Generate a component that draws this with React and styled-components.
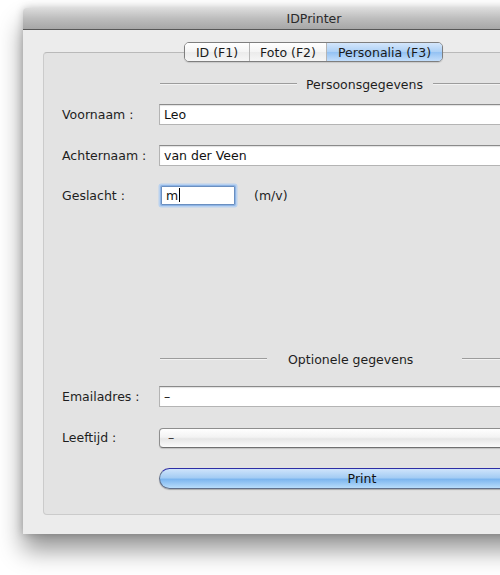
import React from "react";
import styled, { createGlobalStyle } from "styled-components";

const Global = createGlobalStyle`
  html, body { margin: 0; padding: 0; background: #ffffff; overflow: hidden; }
  body { width: 500px; height: 575px; font-family: "DejaVu Sans", "Liberation Sans", sans-serif; }
`;

const Desktop = styled.div`
  width: 500px;
  height: 575px;
  overflow: hidden;
  padding: 8px 0 0 23px;
  box-sizing: border-box;
`;

const Window = styled.div`
  width: 582px;
  height: 526px;
  background: #ececec;
  display: flex;
  flex-direction: column;
  box-shadow: 0 16px 24px rgba(0, 0, 0, 0.42), 0 0 8px rgba(0, 0, 0, 0.22);
  border-radius: 4px 4px 0 0;
`;

const TitleBar = styled.div`
  height: 21px;
  flex: none;
  display: flex;
  align-items: center;
  justify-content: center;
  background: linear-gradient(#dcdcdc, #bdbdbd 50%, #a7a7a7);
  border-bottom: 1px solid #575757;
  border-radius: 4px 4px 0 0;
  font-size: 12.5px;
  color: #2a2a2a;
`;

const Body = styled.div`
  flex: 1;
  display: flex;
  flex-direction: column;
  padding: 12px 21px 19px 20px;
`;

const TabsRow = styled.div`
  display: flex;
  justify-content: center;
  margin-bottom: -10px;
  position: relative;
  z-index: 1;
`;

const Segmented = styled.div`
  display: flex;
  height: 18px;
  border: 1px solid #7e7e7e;
  border-radius: 5px;
  overflow: hidden;
  box-shadow: 0 1px 1px rgba(0, 0, 0, 0.12);
`;

const Segment = styled.div`
  width: ${(p) => p.$w}px;
  display: flex;
  align-items: center;
  justify-content: center;
  font-size: 12.5px;
  color: #1a1a1a;
  background: ${(p) =>
    p.$active
      ? "linear-gradient(#d4e6fb, #acd0f6 50%, #93c1f3 51%, #c3defb)"
      : "linear-gradient(#ffffff, #f4f4f4 50%, #ebebeb 51%, #f6f6f6)"};
  border-left: ${(p) => (p.$first ? "none" : "1px solid #b5b5b5")};
`;

const Panel = styled.div`
  flex: 1;
  box-sizing: border-box;
  background: #e3e3e3;
  border: 1px solid #cbcbcb;
  border-top-color: #b9b9b9;
  border-radius: 4px;
  padding: 22px 18px 0 18px;
  display: flex;
  flex-direction: column;
`;

const SectionHeader = styled.div`
  display: flex;
  align-items: center;
  margin-left: ${(p) => p.$indent}px;
  height: 18px;
  margin-top: ${(p) => p.$top}px;
  font-size: 12.5px;
  color: #1e1e1e;
`;

const Line = styled.div`
  height: 1px;
  background: #9c9c9c;
  border-bottom: 1px solid #f2f2f2;
  ${(p) => (p.$w ? `width: ${p.$w}px; flex: none;` : "flex: 1;")}
`;

const HeaderText = styled.span`
  padding: 0 ${(p) => p.$r}px 0 ${(p) => p.$l}px;
  white-space: nowrap;
`;

const Row = styled.div`
  display: flex;
  align-items: center;
  margin-top: ${(p) => p.$top}px;
  height: ${(p) => p.$h || 22}px;
`;

const Label = styled.div`
  width: 97px;
  flex: none;
  font-size: 12.5px;
  color: #1e1e1e;
`;

const TextField = styled.div`
  flex: 1;
  height: 21px;
  box-sizing: border-box;
  background: #fff;
  border: 1px solid #b4b4b4;
  border-top-color: #8a8a8a;
  box-shadow: inset 0 1px 1px rgba(0, 0, 0, 0.12);
  display: flex;
  align-items: center;
  padding-left: 4px;
  font-size: 12.5px;
  color: #111;
`;

const FocusField = styled(TextField)`
  flex: none;
  width: 74px;
  height: 19px;
  margin-left: 2px;
  border-color: #6a8fc0;
  box-shadow: 0 0 0 1px #8fb4e4, 0 0 0 2.5px #b9d2f0;
  border-radius: 1px;
`;

const Caret = styled.span`
  display: inline-block;
  width: 1px;
  height: 14px;
  background: #000;
  margin-left: 1px;
`;

const Hint = styled.span`
  font-size: 12.5px;
  color: #1e1e1e;
  margin-left: 19px;
`;

const Popup = styled.div`
  flex: 1;
  height: 20px;
  box-sizing: border-box;
  border: 1px solid #8e8e8e;
  border-bottom-color: #6f6f6f;
  border-radius: 4px;
  background: linear-gradient(#ffffff, #f3f3f3 45%, #e6e6e6 55%, #fbfbfb);
  box-shadow: 0 1px 1px rgba(0, 0, 0, 0.15);
  display: flex;
  align-items: center;
  padding-left: 8px;
  font-size: 12.5px;
  color: #333;
`;

const PrintButton = styled.div`
  flex: 1;
  margin-left: 97px;
  height: 21px;
  box-sizing: border-box;
  border: 1px solid #5f6e8a;
  border-top-color: #2e2ea6;
  border-radius: 11px;
  background: linear-gradient(#cfe4fb, #a5cdf4 45%, #7db6ef 55%, #b8dcfb);
  box-shadow: 0 1px 1px rgba(0, 0, 0, 0.25);
  display: flex;
  align-items: center;
  justify-content: center;
  font-size: 12.5px;
  color: #111;
`;

export default function App() {
  return (
    <>
      <Global />
      <Desktop>
        <Window>
          <TitleBar>IDPrinter</TitleBar>
          <Body>
            <TabsRow>
              <Segmented>
                <Segment $w={64} $first>ID (F1)</Segment>
                <Segment $w={76}>Foto (F2)</Segment>
                <Segment $w={115} $active>Personalia (F3)</Segment>
              </Segmented>
            </TabsRow>
            <Panel>
              <SectionHeader $indent={98} $top={0}>
                <Line $w={137} />
                <HeaderText $l={9} $r={10}>Persoonsgegevens</HeaderText>
                <Line />
              </SectionHeader>
              <Row $top={10}>
                <Label>Voornaam :</Label>
                <TextField>Leo</TextField>
              </Row>
              <Row $top={19}>
                <Label>Achternaam :</Label>
                <TextField>van der Veen</TextField>
              </Row>
              <Row $top={18}>
                <Label>Geslacht :</Label>
                <FocusField>m<Caret /></FocusField>
                <Hint>(m/v)</Hint>
              </Row>
              <SectionHeader $indent={98} $top={144}>
                <Line $w={107} />
                <HeaderText $l={21} $r={49}>Optionele gegevens</HeaderText>
                <Line />
              </SectionHeader>
              <Row $top={17}>
                <Label>Emailadres :</Label>
                <TextField>–</TextField>
              </Row>
              <Row $top={20} $h={21}>
                <Label>Leeftijd :</Label>
                <Popup>–</Popup>
              </Row>
              <Row $top={19}>
                <PrintButton>Print</PrintButton>
              </Row>
            </Panel>
          </Body>
        </Window>
      </Desktop>
    </>
  );
}
